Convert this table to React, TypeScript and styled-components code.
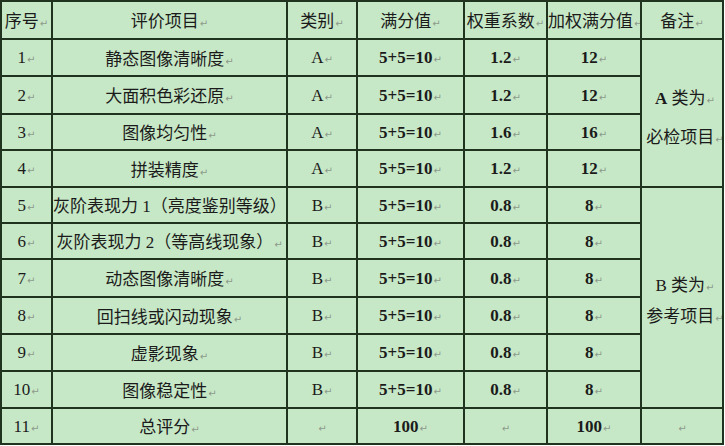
import React from "react";
import styled, { createGlobalStyle } from "styled-components";

const Global = createGlobalStyle`
  html, body { margin: 0; padding: 0; background: #ffffff; }
  body { font-family: "Liberation Serif", "Noto Sans CJK SC", serif; }
`;

const Table = styled.table`
  border-collapse: collapse;
  table-layout: fixed;
  width: 724px;
  background: #c7e8c6;
  color: #1b1b1b;
  border: 2px solid #1f331f;
`;

const Row = styled.tr<{ $h: number }>`
  height: ${(p) => p.$h}px;
`;

const Cell = styled.td<{ $bold?: boolean; $cjk?: boolean }>`
  border: 2px solid #1f331f;
  padding: 0;
  text-align: center;
  vertical-align: middle;
  font-size: 17px;
  white-space: nowrap;
  overflow: hidden;
  font-family: ${(p) =>
    p.$cjk ? `"Noto Sans CJK SC", sans-serif` : `"Liberation Serif", "Noto Sans CJK SC", serif`};
  font-weight: ${(p) => (p.$bold ? 700 : 400)};
  line-height: 1;
`;

const Note = styled.div<{ $gap: number; $top: number }>`
  display: flex;
  flex-direction: column;
  align-items: center;
  gap: ${(p) => p.$gap}px;
  font-size: 17px;
  font-family: "Liberation Serif", "Noto Sans CJK SC", serif;
  padding-left: 6px;
  padding-top: ${(p) => p.$top}px;
`;

const NoteLine = styled.span`
  white-space: nowrap;
`;

const Bold = styled.span`
  font-weight: 700;
`;

const Cjk = styled.span`
  font-family: "Noto Sans CJK SC", sans-serif;
`;

const Mark = styled.span`
  font-family: "DejaVu Sans", sans-serif;
  font-size: 10px;
  font-weight: 400;
  color: #8c9a8c;
  margin-left: 1px;
`;

const M = () => <Mark>↵</Mark>;

type R = {
  n: string;
  item: React.ReactNode;
  cls: string;
  full: string;
  w: string;
  total: string;
};

const rows: R[] = [
  { n: "1", item: "静态图像清晰度", cls: "A", full: "5+5=10", w: "1.2", total: "12" },
  { n: "2", item: "大面积色彩还原", cls: "A", full: "5+5=10", w: "1.2", total: "12" },
  { n: "3", item: "图像均匀性", cls: "A", full: "5+5=10", w: "1.6", total: "16" },
  { n: "4", item: "拼装精度", cls: "A", full: "5+5=10", w: "1.2", total: "12" },
  {
    n: "5",
    item: (
      <>
        <Cjk>灰阶表现力</Cjk> 1<Cjk>（亮度鉴别等级）</Cjk>
      </>
    ),
    cls: "B",
    full: "5+5=10",
    w: "0.8",
    total: "8",
  },
  {
    n: "6",
    item: (
      <>
        <Cjk>灰阶表现力</Cjk> 2<Cjk>（等高线现象）</Cjk>
      </>
    ),
    cls: "B",
    full: "5+5=10",
    w: "0.8",
    total: "8",
  },
  { n: "7", item: "动态图像清晰度", cls: "B", full: "5+5=10", w: "0.8", total: "8" },
  { n: "8", item: "回扫线或闪动现象", cls: "B", full: "5+5=10", w: "0.8", total: "8" },
  { n: "9", item: "虚影现象", cls: "B", full: "5+5=10", w: "0.8", total: "8" },
  { n: "10", item: "图像稳定性", cls: "B", full: "5+5=10", w: "0.8", total: "8" },
];

const heights = [37, 38, 36, 37, 36, 36, 38, 37, 37, 37];
const widths = [51, 235, 70, 107, 83, 94, 82];

export default function App() {
  return (
    <>
      <Global />
      <Table>
        <colgroup>
          {widths.map((w, i) => (
            <col key={i} width={w} />
          ))}
        </colgroup>
        <tbody>
          <Row $h={38}>
            <Cell $cjk>序号<M /></Cell>
            <Cell $cjk>评价项目<M /></Cell>
            <Cell $cjk>类别<M /></Cell>
            <Cell $cjk>满分值<M /></Cell>
            <Cell $cjk>权重系数<M /></Cell>
            <Cell $cjk>加权满分值<M /></Cell>
            <Cell $cjk>备注<M /></Cell>
          </Row>
          {rows.map((r, i) => (
            <Row $h={heights[i]} key={r.n}>
              <Cell>
                {r.n}
                <M />
              </Cell>
              <Cell $cjk={typeof r.item === "string"}>
                {r.item}
                <M />
              </Cell>
              <Cell>
                {r.cls}
                <M />
              </Cell>
              <Cell $bold>
                {r.full}
                <M />
              </Cell>
              <Cell $bold>
                {r.w}
                <M />
              </Cell>
              <Cell $bold>
                {r.total}
                <M />
              </Cell>
              {i === 0 && (
                <Cell rowSpan={4}>
                  <Note $gap={20} $top={8}>
                    <NoteLine>
                      <Bold>A</Bold> <Cjk>类为</Cjk>
                      <M />
                    </NoteLine>
                    <NoteLine>
                      <Cjk>必检项目</Cjk>
                      <M />
                    </NoteLine>
                  </Note>
                </Cell>
              )}
              {i === 4 && (
                <Cell rowSpan={6}>
                  <Note $gap={12} $top={4}>
                    <NoteLine>
                      B <Cjk>类为</Cjk>
                      <M />
                    </NoteLine>
                    <NoteLine>
                      <Cjk>参考项目</Cjk>
                      <M />
                    </NoteLine>
                  </Note>
                </Cell>
              )}
            </Row>
          ))}
          <Row $h={36}>
            <Cell>
              11
              <M />
            </Cell>
            <Cell $cjk>
              总评分
              <M />
            </Cell>
            <Cell>
              <M />
            </Cell>
            <Cell $bold>
              100
              <M />
            </Cell>
            <Cell>
              <M />
            </Cell>
            <Cell $bold>
              100
              <M />
            </Cell>
            <Cell>
              <M />
            </Cell>
          </Row>
        </tbody>
      </Table>
    </>
  );
}
